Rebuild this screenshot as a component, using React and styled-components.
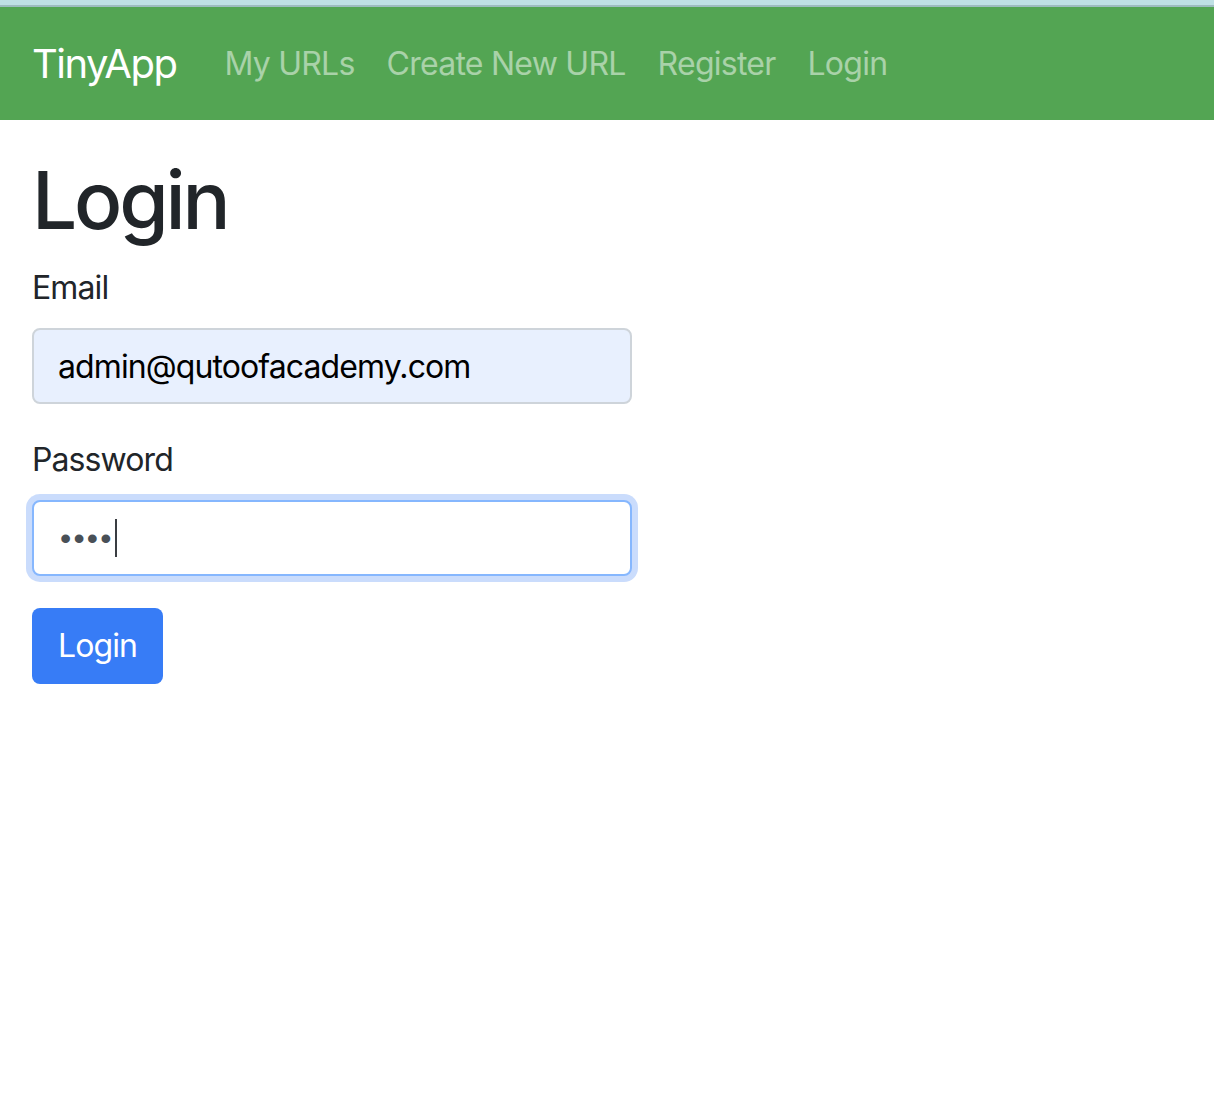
import React from 'react';
import styled, { createGlobalStyle } from 'styled-components';

const GlobalStyle = createGlobalStyle`
  * { box-sizing: border-box; }
  body {
    margin: 0;
    background: #ffffff;
    color: #212529;
    font-family: Inter, "Noto Sans", "Liberation Sans", sans-serif;
    font-size: 32px;
    line-height: 1.5;
    letter-spacing: -0.9px;
  }
`;

const ChromeStrip = styled.div`
  height: 7px;
  background: #bfe0e4;
  border-bottom: 2px solid #9dbcbf;
`;

const Navbar = styled.nav`
  display: flex;
  align-items: center;
  height: 113px;
  padding: 0 32px;
  background: #53a553;
`;

const Brand = styled.a`
  color: #ffffff;
  font-size: 40px;
  margin-right: 32px;
  text-decoration: none;
  letter-spacing: -1.5px;
`;

const NavLink = styled.a`
  color: rgba(255, 255, 255, 0.5);
  padding: 0 16px;
  text-decoration: none;
  letter-spacing: -0.75px;
`;

const Main = styled.main`
  padding: 32px 32px 0;
`;

const Title = styled.h1`
  margin: 0 0 16px;
  font-size: 80px;
  font-weight: 500;
  line-height: 1.2;
  letter-spacing: -3.2px;
`;

const Field = styled.div`
  margin-bottom: 32px;
`;

const Label = styled.label`
  display: block;
  margin-bottom: 16px;
`;

const InputWrap = styled.div`
  position: relative;
  width: 600px;
`;

const Input = styled.input`
  display: block;
  width: 600px;
  height: 76px;
  padding: 12px 24px;
  font: inherit;
  letter-spacing: -0.9px;
  color: ${p => (p.$filled ? '#000000' : '#495057')};
  background: ${p => (p.$filled ? '#e8f0fe' : '#ffffff')};
  border: 2px solid ${p => (p.$focused ? '#86b7fe' : '#ced4da')};
  border-radius: 8px;
  outline: none;
  box-shadow: ${p => (p.$focused ? '0 0 0 6px #cadcfc' : 'none')};

  &[type='password'] {
    font-family: "Liberation Sans", sans-serif;
    letter-spacing: 2.2px;
    padding-left: 26px;
  }
`;

const Caret = styled.span`
  position: absolute;
  left: 83px;
  top: 19px;
  width: 2px;
  height: 38px;
  background: #3a3d42;
`;

const Button = styled.button`
  height: 76px;
  padding: 0 26px;
  font: inherit;
  letter-spacing: -0.9px;
  color: #ffffff;
  background: #377cf6;
  border: none;
  border-radius: 8px;
  cursor: pointer;
`;

export default function App() {
  return (
    <>
      <GlobalStyle />
      <ChromeStrip />
      <Navbar>
        <Brand href="#">TinyApp</Brand>
        <NavLink href="#">My URLs</NavLink>
        <NavLink href="#">Create New URL</NavLink>
        <NavLink href="#">Register</NavLink>
        <NavLink href="#">Login</NavLink>
      </Navbar>
      <Main>
        <Title>Login</Title>
        <form onSubmit={e => e.preventDefault()}>
          <Field>
            <Label htmlFor="email">Email</Label>
            <Input id="email" type="text" $filled defaultValue="admin@qutoofacademy.com" />
          </Field>
          <Field>
            <Label htmlFor="password">Password</Label>
            <InputWrap>
              <Input id="password" type="password" $focused defaultValue="1234" />
              <Caret />
            </InputWrap>
          </Field>
          <Button type="submit">Login</Button>
        </form>
      </Main>
    </>
  );
}
